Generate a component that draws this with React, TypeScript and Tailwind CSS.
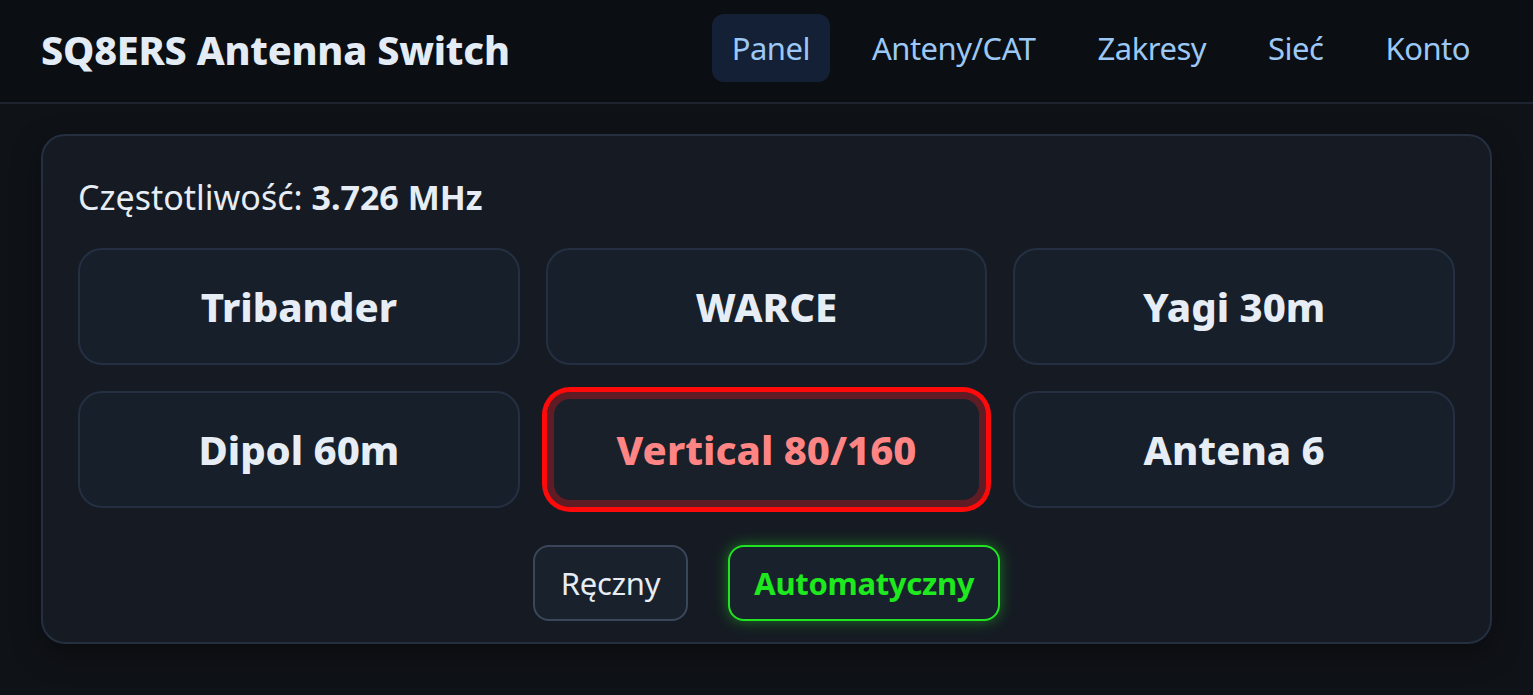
import { useState } from "react";

const antennas = [
  "Tribander",
  "WARCE",
  "Yagi 30m",
  "Dipol 60m",
  "Vertical 80/160",
  "Antena 6",
];

const navItems = ["Panel", "Anteny/CAT", "Zakresy", "Sieć", "Konto"];

export default function App() {
  const [active, setActive] = useState("Vertical 80/160");
  const [mode, setMode] = useState<"manual" | "auto">("auto");

  return (
    <div
      className="min-h-[695px] bg-[#0f1217] text-[#e6edf5]"
      style={{ fontFamily: '"Noto Sans", "Open Sans", sans-serif' }}
    >
      {/* Header */}
      <header className="flex h-[104px] items-center justify-between border-b-2 border-[#1d2430] bg-[#0b0e13] pl-[41px] pr-[43px]">
        <h1 className="text-[39.5px] font-extrabold tracking-[-0.2px] text-[#e3ecf5]">
          SQ8ERS Antenna Switch
        </h1>
        <nav className="mb-[6px] flex items-center gap-[22px]">
          {navItems.map((item) => (
            <a
              key={item}
              className={`flex h-[68px] items-center rounded-[12px] px-[20px] text-[31px] tracking-[-0.5px] text-[#9cc8f5] ${
                item === "Panel" ? "bg-[#132036]" : ""
              }`}
            >
              {item}
            </a>
          ))}
        </nav>
      </header>

      {/* Panel card */}
      <main className="px-[41px] pt-[30px]">
        <div className="rounded-[24px] border-2 border-[#242f40] bg-[#161b23] px-[35px] pb-[21px] pt-[36px] shadow-[0_10px_30px_rgba(0,0,0,0.35)]">
          <p className="text-[34px] leading-[50px]">
            Częstotliwość: <strong className="font-bold">3.726 MHz</strong>
          </p>

          <div className="mt-[26px] grid grid-cols-3 gap-[26px]">
            {antennas.map((name) => {
              const isActive = name === active;
              return (
                <button
                  key={name}
                  onClick={() => setActive(name)}
                  className={`flex h-[117px] items-center justify-center rounded-[24px] text-[40px] font-extrabold ${
                    isActive
                      ? "border border-[#ff0a0a] bg-[#19202a] text-[#ff8585] shadow-[0_0_0_4px_#ff0a0a,inset_0_0_0_7px_#601c25]"
                      : "border-2 border-[#243042] bg-[#171f2a] text-[#e6edf5]"
                  }`}
                >
                  {name}
                </button>
              );
            })}
          </div>

          <div className="mt-[37px] flex items-center justify-center gap-[40px]">
            <button
              onClick={() => setMode("manual")}
              className={`flex h-[76px] items-center rounded-[16px] border-2 px-[26px] text-[31px] tracking-[-0.3px] ${
                mode === "manual"
                  ? "border-[#22e322] font-bold text-[#1ee81e] shadow-[0_0_14px_rgba(34,230,34,0.45)]"
                  : "border-[#3a475a] bg-[#19212d] text-[#e6edf5]"
              }`}
            >
              Ręczny
            </button>
            <button
              onClick={() => setMode("auto")}
              className={`flex h-[76px] items-center rounded-[16px] border-2 px-[24px] text-[31px] tracking-[-0.3px] ${
                mode === "auto"
                  ? "border-[#22e322] bg-[#19212d] font-bold text-[#1ee81e] shadow-[0_0_14px_rgba(34,230,34,0.45)]"
                  : "border-[#3a475a] bg-[#19212d] text-[#e6edf5]"
              }`}
            >
              Automatyczny
            </button>
          </div>
        </div>
      </main>
    </div>
  );
}
